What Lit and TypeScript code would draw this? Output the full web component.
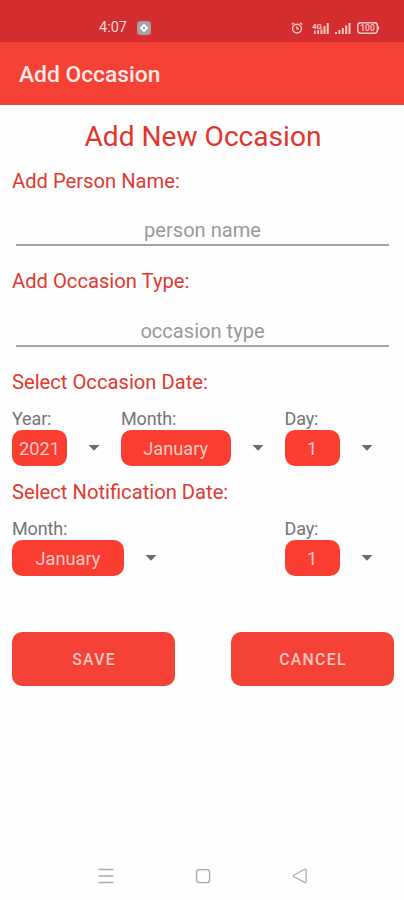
import { LitElement, html, css } from "lit";
import { customElement, property } from "lit/decorators.js";

@customElement("date-spinner")
class DateSpinner extends LitElement {
  @property() label = "";
  @property() value = "";

  static styles = css`
    :host { display: block; }
    .label { font-size: 18px; line-height: 20px; height: 21px; color: #757575; letter-spacing: -0.15px; }
    .row { display: flex; align-items: center; }
    .pill {
      flex: 1; height: 36px; border-radius: 10px; background: #f93d31; color: #ffc9c4;
      font-size: 18.2px; line-height: 38px; text-align: center;
    }
    svg { display: block; margin: 0 21px 0 21px; flex: none; }
  `;

  render() {
    return html`
      <div class="label">${this.label}</div>
      <div class="row">
        <div class="pill">${this.value}</div>
        <svg width="12" height="6" viewBox="0 0 12 6"><path d="M.5 0h11L6 5.8z" fill="#6b6b6b" /></svg>
      </div>`;
  }
}

@customElement("app-root")
class AppRoot extends LitElement {
  static styles = css`
    :host {
      display: flex; flex-direction: column; height: 900px; overflow: hidden;
      background: #fefefe; font-family: Roboto, sans-serif;
    }
    .status {
      height: 42px; flex: none; box-sizing: border-box; background: #d32d2f; color: #ffd9d6;
      display: flex; align-items: center; padding: 13px 24px 0 99px; font-size: 14.5px;
    }
    .status svg { display: block; flex: none; }
    .chip { margin-left: 10px; }
    .alarm { margin-left: auto; }
    .net { margin-left: 9px; }
    .battery { margin-left: 6px; }
    .bar {
      height: 63px; flex: none; background: #f64236; color: #ffeae6; font-weight: 500;
      font-size: 22.8px; line-height: 65px; padding-left: 19px;
    }
    main { padding: 0 10px 0 12px; flex: 1; }
    h1 {
      margin: 0; font-weight: 400; font-size: 28.1px; line-height: 63px; height: 63px;
      text-align: center; color: #e0352b;
    }
    h2 { margin: 0; font-weight: 400; font-size: 20.2px; line-height: 26px; color: #e0392f; }
    .field {
      box-sizing: border-box; height: 52px; margin: 0 5px 22px 4px; padding-top: 23px;
      border-bottom: 2px solid #a2a2a2; text-align: center; font-size: 20.1px; line-height: 27px; color: #999;
    }
    .field.second { margin-top: 1px; }
    .dates { display: grid; grid-template-columns: 109px 163.5px 109px; margin: 14px 0 13px; }
    .dates.notify { grid-template-columns: 166px 106.5px 109px; margin-bottom: 56px; }
    .dates.notify .last { grid-column: 3; }
    .actions { display: flex; justify-content: space-between; }
    button {
      width: 163px; height: 54px; border: 0; border-radius: 10px; background: #f54236; color: #ffc5be;
      font: 500 15.8px Roboto, sans-serif; letter-spacing: 1.3px; padding: 1px 0 0 1px;
    }
    nav { height: 48px; flex: none; display: flex; justify-content: center; gap: 81px; align-items: center; padding-left: 1px; }
    nav svg { display: block; }
  `;

  render() {
    return html`
      <div class="status">
        <span>4:07</span>
        <svg class="chip" width="14" height="14" viewBox="0 0 14 14">
          <rect width="14" height="14" rx="3.5" fill="#a8a0a8" />
          <path d="M7 2.6 11.4 7 7 11.4 2.6 7z" fill="#fff" /><circle cx="7" cy="7" r="1.3" fill="#a8a0a8" />
        </svg>
        <svg class="alarm" width="12" height="12" viewBox="0 0 12 12" fill="none" stroke="#ffc9c4" stroke-width="1.4">
          <circle cx="6" cy="6.6" r="4.4" /><path d="M.7 2.5 3 .8M11.3 2.5 9 .8M6 4.2v2.7h2" />
        </svg>
        <svg class="net" width="39" height="12" viewBox="0 0 39 12">
          <text x="0" y="6.8" font-size="8" font-weight="700" fill="#ffc9c4" font-family="Roboto, sans-serif">4G</text>
          <path d="M2 8.5h1.6V12H2zM5.3 8h1.8v4H5.3zM8.5 7.5h1.9V12H8.5zM11.5 4h2v8h-2zM14.7 1h2v11h-2zM23 10h2v2h-2zM26.4 8h2v4h-2zM29.8 6h2v6h-2zM33.2 3.5h2V12h-2zM36.5 1h2v11h-2z" fill="#ffc9c4" />
        </svg>
        <svg class="battery" width="23" height="12" viewBox="0 0 23 12">
          <rect x=".8" y=".7" width="19.6" height="10.6" rx="3" fill="none" stroke="#ffc9c4" stroke-width="1.5" />
          <path d="M21.2 3.5q2.4 2.5 0 5z" fill="#ffc9c4" />
          <text x="10.5" y="9" text-anchor="middle" font-size="8.5" font-weight="500" fill="#ffc9c4" font-family="Roboto, sans-serif">100</text>
        </svg>
      </div>
      <div class="bar">Add Occasion</div>
      <main>
        <h1>Add New Occasion</h1>
        <h2>Add Person Name:</h2>
        <div class="field">person name</div>
        <h2>Add Occasion Type:</h2>
        <div class="field second">occasion type</div>
        <h2>Select Occasion Date:</h2>
        <div class="dates">
          <date-spinner label="Year:" value="2021"></date-spinner>
          <date-spinner label="Month:" value="January"></date-spinner>
          <date-spinner label="Day:" value="1"></date-spinner>
        </div>
        <h2>Select Notification Date:</h2>
        <div class="dates notify">
          <date-spinner label="Month:" value="January"></date-spinner>
          <date-spinner class="last" label="Day:" value="1"></date-spinner>
        </div>
        <div class="actions"><button>SAVE</button><button>CANCEL</button></div>
      </main>
      <nav>
        <svg width="16" height="16" viewBox="0 0 16 16" stroke="#aaa" stroke-width="1.4"><path d="M.5 1.5h15M.5 8h15M.5 14.5h15" /></svg>
        <svg width="16" height="16" viewBox="0 0 16 16" fill="none" stroke="#aaa" stroke-width="1.4"><rect x="1.6" y="1.6" width="13" height="13" rx="2.5" /></svg>
        <svg width="16" height="16" viewBox="0 0 16 16" fill="none" stroke="#aaa" stroke-width="1.3" stroke-linejoin="round"><path d="M1.7 7.3 12.6 1.3q1.5-.6 1.5 1v11.2q0 1.5-1.5.9L1.7 8.5q-.9-.6 0-1.2z" /></svg>
      </nav>`;
  }
}
